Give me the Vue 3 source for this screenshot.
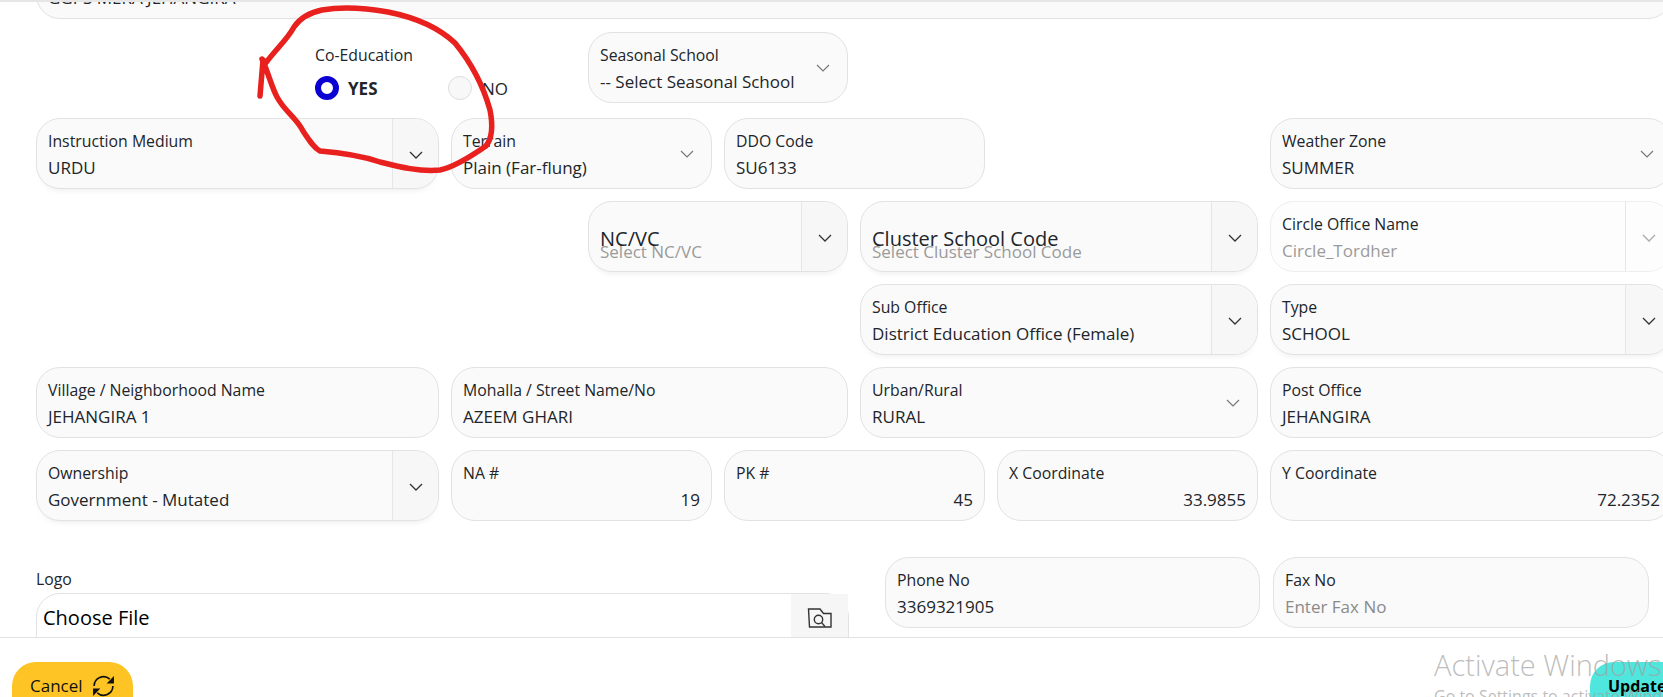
<template>
  <div class="page">
    <div class="top-rule"></div>

    <div class="body">
      <form class="form" @submit.prevent>
        <div class="grid row-school">
          <div class="field col-all">
            <span class="label">School Name</span>
            <span class="value">GGPS MERA JEHANGIRA</span>
          </div>
        </div>

        <div v-for="(row, i) in rows" :key="i" class="grid" :class="{ 'row-first': i === 0 }">
          <template v-for="f in row" :key="f.label">
            <div v-if="f.radio" class="coed" :class="f.col">
              <span class="coed-label">{{ f.label }}</span>
              <div class="radios">
                <span class="radio on"></span>
                <b class="yes">YES</b>
                <span class="radio"></span>
                <span class="no">NO</span>
              </div>
            </div>
            <div v-else class="field" :class="[f.col, { disabled: f.disabled, 'has-addon': f.addon, empty: f.empty }]">
              <span class="label">{{ f.label }}</span>
              <span class="value" :class="{ right: f.right, placeholder: f.placeholder }">{{ f.value }}</span>
              <span v-if="f.chevron" class="chevron-plain">
                <svg width="14" height="8" viewBox="0 0 14 8"><path d="M1 1l6 6 6-6" fill="none" stroke="#777" stroke-width="1.2" /></svg>
              </span>
              <span v-if="f.addon" class="addon">
                <svg width="14" height="8" viewBox="0 0 14 8"><path d="M1 1l6 6 6-6" fill="none" :stroke="f.disabled ? '#aaa' : '#333'" stroke-width="1.3" /></svg>
              </span>
            </div>
          </template>
        </div>

        <div class="last-row">
          <div class="logo">
            <span class="logo-label">Logo</span>
            <div class="file">
              <span class="file-text">Choose File</span>
              <span class="file-addon">
                <svg width="25" height="20" viewBox="0 0 25 20" fill="none" stroke="#333" stroke-width="1.4">
                  <path d="M1.500 1h11.500l3.500 4.500h7.500v13.500H2.500z" />
                  <circle cx="11.500" cy="11.500" r="4.200" />
                  <path d="M14.500 14.500l3.500 4" />
                </svg>
              </span>
            </div>
          </div>
          <div class="field phone">
            <span class="label">Phone No</span>
            <span class="value">3369321905</span>
          </div>
          <div class="field fax">
            <span class="label">Fax No</span>
            <span class="value placeholder">Enter Fax No</span>
          </div>
        </div>
      </form>
    </div>

    <footer class="footer">
      <button type="button" class="btn cancel">
        Cancel
        <svg width="23" height="22" viewBox="0 0 22 21">
          <g fill="none" stroke="#111" stroke-width="1.600">
            <path d="M2 10.500A9 9 0 0 1 17 4" />
            <path d="M20 10.500A9 9 0 0 1 5 17" />
          </g>
          <path d="M21 1v7h-7zM1 20v-7h7z" fill="#111" />
        </svg>
      </button>
      <button type="button" class="btn update">Update</button>
    </footer>

    <!-- red pen annotation from the screenshot -->
    <svg class="scribble" width="1663" height="697" viewBox="0 0 1663 697">
      <path
        d="M260 96 L263 60 M262 59 C268 72 272 88 277 97 C285 112 296 117 303 131 C309 140 314 148 320 151 C345 153 365 157 380 162 C400 167 420 172 440 170 C455 167 473 155 486 146 C493 137 493 125 490 110 C483 85 473 65 455 43 C438 27 413 17 388 12 C365 8 340 7 322 10 C308 13 300 18 294 27 C287 40 275 50 265 64"
        fill="none"
        stroke="#e8201e"
        stroke-width="5.500"
        stroke-linecap="round"
        stroke-linejoin="round"
      />
    </svg>

    <div class="watermark">
      <div class="wm-big">Activate Windows</div>
      <div class="wm-small">Go to Settings to activate Windows.</div>
    </div>
  </div>
</template>

<script setup>
const rows = [
  [
    { label: 'Co-Education', radio: true, col: 'c-coed' },
    { label: 'Seasonal School', value: '-- Select Seasonal School', col: 'c-5-7', chevron: true },
  ],
  [
    { label: 'Instruction Medium', value: 'URDU', col: 'c-1-4', addon: true },
    { label: 'Terrain', value: 'Plain (Far-flung)', col: 'c-4-6', chevron: true },
    { label: 'DDO Code', value: 'SU6133', col: 'c-6-8' },
    { label: 'Weather Zone', value: 'SUMMER', col: 'c-10-13', chevron: true },
  ],
  [
    { label: 'NC/VC', value: 'Select NC/VC', col: 'c-5-7', addon: true, empty: true },
    { label: 'Cluster School Code', value: 'Select Cluster School Code', col: 'c-7-10', addon: true, empty: true },
    { label: 'Circle Office Name', value: 'Circle_Tordher', col: 'c-10-13', addon: true, disabled: true },
  ],
  [
    { label: 'Sub Office', value: 'District Education Office (Female)', col: 'c-7-10', addon: true },
    { label: 'Type', value: 'SCHOOL', col: 'c-10-13', addon: true },
  ],
  [
    { label: 'Village / Neighborhood Name', value: 'JEHANGIRA 1', col: 'c-1-4' },
    { label: 'Mohalla / Street Name/No', value: 'AZEEM GHARI', col: 'c-4-7' },
    { label: 'Urban/Rural', value: 'RURAL', col: 'c-7-10', chevron: true },
    { label: 'Post Office', value: 'JEHANGIRA', col: 'c-10-13' },
  ],
  [
    { label: 'Ownership', value: 'Government - Mutated', col: 'c-1-4', addon: true },
    { label: 'NA #', value: '19', col: 'c-4-6', right: true },
    { label: 'PK #', value: '45', col: 'c-6-8', right: true },
    { label: 'X Coordinate', value: '33.9855', col: 'c-8-10', right: true },
    { label: 'Y Coordinate', value: '72.2352', col: 'c-10-13', right: true },
  ],
]
</script>

<style>
html,
body {
  margin: 0;
  overflow: hidden;
  background: #fff;
}
</style>

<style scoped>
.page {
  position: relative;
  width: 1663px;
  height: 697px;
  overflow: hidden;
  display: flex;
  flex-direction: column;
  background: #fff;
  color: #212529;
  font-family: "Open Sans", "Noto Sans", sans-serif;
  font-size: 15.8px;
}

.top-rule {
  height: 2px;
  flex: none;
  background: #e6e6e6;
}

.body {
  flex: 1;
  min-height: 0;
  overflow: hidden;
}

.form {
  margin-top: -54px;
  padding-left: 36px;
  width: 1700px;
}

.grid {
  display: grid;
  grid-template-columns: 138px 138px 139px 137px 136px 136px 137px 136px 137px 138px 138px 138px;
  margin-bottom: 12px;
}

.row-school {
  margin-bottom: 13px;
}

.row-first {
  margin-bottom: 15px;
}

.grid > * {
  margin-right: 12px;
}

.col-all { grid-column: 1 / 13; }
.c-coed { grid-column: 3 / 5; }
.c-1-4 { grid-column: 1 / 4; }
.c-4-6 { grid-column: 4 / 6; }
.c-4-7 { grid-column: 4 / 7; }
.c-5-7 { grid-column: 5 / 7; }
.c-6-8 { grid-column: 6 / 8; }
.c-7-10 { grid-column: 7 / 10; }
.c-8-10 { grid-column: 8 / 10; }
.c-10-13 { grid-column: 10 / 13; }

.field {
  position: relative;
  height: 71px;
  box-sizing: border-box;
  border: 1px solid #e2e2e2;
  border-radius: 24px;
  background: #fafafa;
  overflow: hidden;
}

.label {
  position: absolute;
  left: 11px;
  top: 11px;
  line-height: 22px;
  white-space: nowrap;
}

.value {
  position: absolute;
  left: 11px;
  right: 11px;
  top: 37px;
  line-height: 24px;
  font-size: 17px;
  white-space: nowrap;
}

.value.right {
  text-align: right;
}

.placeholder {
  color: #8a8a8a;
}

.empty .label {
  top: 24px;
  font-size: 20px;
  line-height: 26px;
}

.empty .value {
  color: #9a9a9a;
  top: 38px;
}

.has-addon {
  box-shadow: 0 5px 6px -4px rgba(0, 0, 0, 0.08);
}

.disabled {
  background: #fdfdfd;
  border-color: #eeeeee;
  box-shadow: none;
}

.disabled .value {
  color: #9b9b9b;
}

.chevron-plain {
  position: absolute;
  right: 17px;
  top: 31px;
  line-height: 0;
}

.addon {
  position: absolute;
  right: 0;
  top: 0;
  bottom: 0;
  width: 46px;
  padding-top: 2px;
  box-sizing: border-box;
  border-left: 1px solid #e6e6e6;
  background: #f7f7f7;
  display: flex;
  align-items: center;
  justify-content: center;
}

.disabled .addon {
  background: #fdfdfd;
}

.coed {
  padding: 12px 0 0 3px;
  height: 71px;
  box-sizing: border-box;
}

.coed-label {
  display: block;
  line-height: 22px;
}

.radios {
  display: flex;
  align-items: center;
  margin-top: 10px;
}

.radio {
  width: 24px;
  height: 24px;
  flex: none;
  box-sizing: border-box;
  border-radius: 50%;
  border: 1px solid #dcdcdc;
  background: #f8f8f8;
}

.radio.on {
  border: 6px solid #0a00d4;
  background: #fff;
}

.yes {
  width: 100px;
  flex: none;
  margin-left: 9px;
  font-size: 17px;
}

.no {
  margin-left: 10px;
  font-size: 17px;
}

.last-row {
  display: flex;
  margin-top: 36px;
}

.logo {
  width: 813px;
  flex: none;
  margin-right: 36px;
}

.logo-label {
  display: block;
  line-height: 22px;
  margin-top: 11px;
}

.file {
  position: relative;
  height: 70px;
  margin-top: 3px;
  box-sizing: border-box;
  border: 1px solid #e2e2e2;
  border-radius: 24px;
  background: #fff;
}

.file-text {
  position: absolute;
  left: 6px;
  top: 11px;
  font-size: 20px;
  line-height: 26px;
  color: #000;
}

.file-addon {
  position: absolute;
  right: 0;
  top: 0;
  bottom: 0;
  width: 57px;
  background: #f6f6f6;
  padding-top: 14px;
  box-sizing: border-box;
  text-align: center;
}

.phone {
  width: 375px;
  margin-right: 13px;
  flex: none;
}

.fax {
  width: 376px;
  flex: none;
}

.footer {
  flex: none;
  height: 60px;
  box-sizing: border-box;
  border-top: 1px solid #e2e2e2;
  padding: 24px 0 0 12px;
  display: flex;
  justify-content: space-between;
  background: #fff;
}

.btn {
  height: 60px;
  flex: none;
  border: none;
  border-radius: 24px;
  font-family: inherit;
  font-size: 17px;
  line-height: 22px;
  padding: 13px 0 0 18px;
  box-sizing: border-box;
  display: flex;
  align-items: flex-start;
}

.cancel {
  width: 121px;
  background: #fec426;
  color: #111;
  gap: 9px;
}

.update {
  width: 120px;
  margin-right: -47px;
  background: #4fe6dd;
  color: #000;
  font-size: 16px;
  font-weight: 700;
}

.scribble {
  position: absolute;
  left: 0;
  top: 0;
  pointer-events: none;
}

.watermark {
  position: absolute;
  left: 1434px;
  top: 645px;
  color: rgba(160, 160, 160, 0.7);
  white-space: nowrap;
  pointer-events: none;
}

.wm-big {
  font-size: 29px;
  font-weight: 300;
  line-height: 40px;
}

.wm-small {
  font-size: 16px;
  line-height: 22px;
}
</style>
